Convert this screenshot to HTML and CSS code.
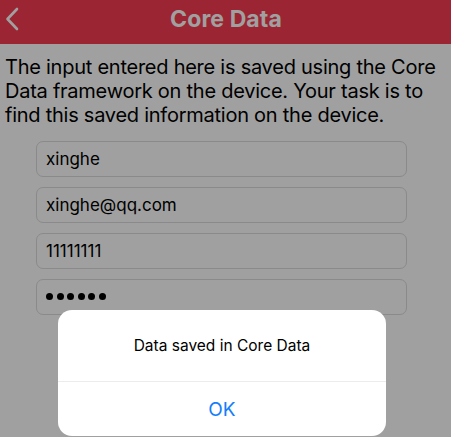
FILE: index.html
```html
<!DOCTYPE html>
<html lang="en">
<head>
    <meta charset="UTF-8">
    <meta name="viewport" content="width=device-width, initial-scale=1.0">
    <title>Core Data</title>
    <link rel="stylesheet" href="styles.css">
</head>
<body>
    <div class="screen">
        <header class="navbar">
            <svg class="back" width="14" height="24" viewBox="0 0 14 24">
                <path d="M12 2 L2.5 12 L12 22" fill="none" stroke="currentColor" stroke-width="2.6" stroke-linecap="round" stroke-linejoin="round"/>
            </svg>
            <h1 class="title">Core Data</h1>
        </header>

        <p class="intro">The input entered here is saved using the Core Data framework on the device. Your task is to find this saved information on the device.</p>

        <div class="form">
            <div class="field">xinghe</div>
            <div class="field">xinghe@qq.com</div>
            <div class="field">11111111</div>
            <div class="field password">
                <span class="dot"></span><span class="dot"></span><span class="dot"></span>
                <span class="dot"></span><span class="dot"></span><span class="dot"></span>
            </div>
        </div>

        <div class="dim"></div>

        <div class="alert">
            <div class="alert-message">Data saved in Core Data</div>
            <div class="alert-button">OK</div>
        </div>
    </div>
</body>
</html>
```

FILE: styles.css
```css
* {
    margin: 0;
    padding: 0;
    box-sizing: border-box;
}

body {
    font-family: 'Inter', 'Roboto', sans-serif;
    background: #ffffff;
    color: #000;
}

.screen {
    position: relative;
    width: 451px;
    height: 437px;
    overflow: hidden;
}

.navbar {
    height: 44px;
    background: #f83b50;
    color: #fff;
    display: flex;
    align-items: center;
    justify-content: center;
    position: relative;
}

.back {
    position: absolute;
    left: 5px;
    top: 7px;
}

.title {
    font-size: 23px;
    font-weight: 700;
    letter-spacing: 0.1px;
    margin-bottom: 7px;
    margin-left: 1px;
}

.intro {
    font-size: 20px;
    line-height: 24px;
    padding: 11px 6px 0 5px;
    letter-spacing: -0.25px;
}

.form {
    display: flex;
    flex-direction: column;
    gap: 10px;
    margin: 14px 44px 0 36px;
}

.field {
    height: 36px;
    border: 1px solid #dcdcdc;
    border-radius: 7px;
    padding: 0 9px;
    display: flex;
    align-items: center;
    font-size: 17px;
}

.password {
    gap: 3.5px;
    padding-bottom: 2px;
}

.dot {
    width: 7px;
    height: 7px;
    border-radius: 50%;
    background: #000;
}

.dim {
    position: absolute;
    inset: 0;
    background: rgba(0, 0, 0, 0.373);
}

.alert {
    position: absolute;
    left: 58px;
    top: 310px;
    width: 328px;
    height: 126px;
    background: #fff;
    border-radius: 14px;
    display: flex;
    flex-direction: column;
}

.alert-message {
    height: 72px;
    display: flex;
    align-items: center;
    justify-content: center;
    font-size: 15.5px;
    border-bottom: 1px solid #ececec;
}

.alert-button {
    flex: 1;
    display: flex;
    align-items: center;
    justify-content: center;
    font-size: 19px;
    color: #147efb;
}
```
